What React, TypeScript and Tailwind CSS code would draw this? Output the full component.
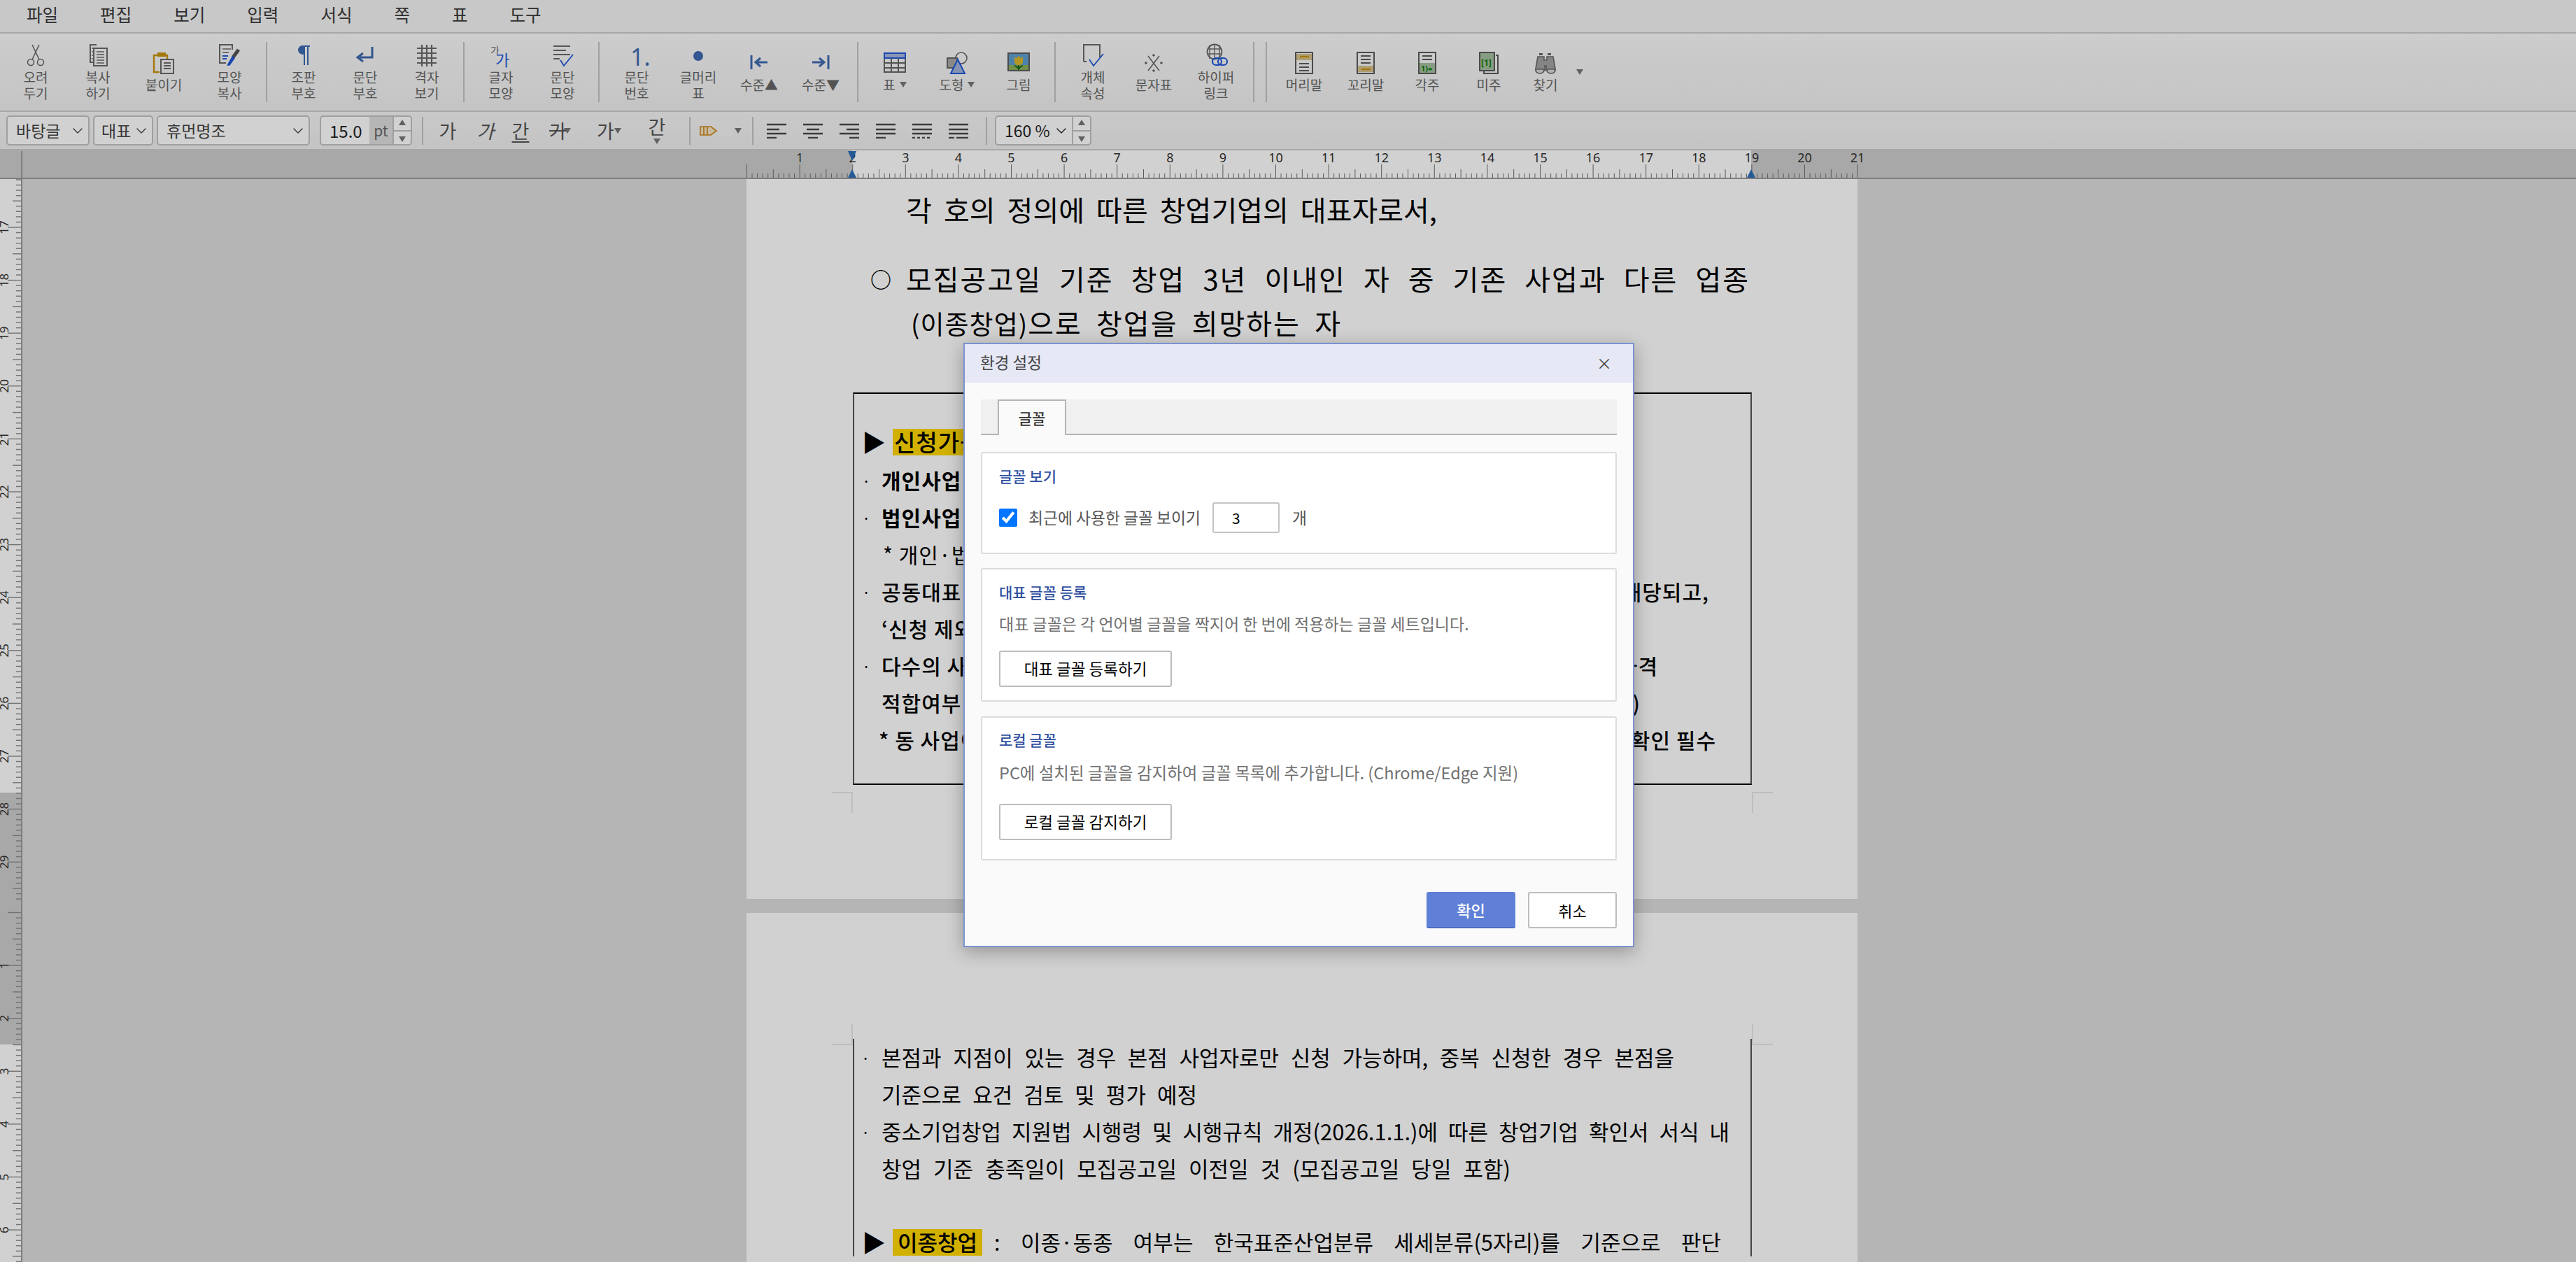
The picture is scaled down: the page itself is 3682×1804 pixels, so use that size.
import { ChevronDown } from 'lucide-react'

const GRAY = '#6a6a6a'
const BLUE = '#3f6bb0'
const VIVID = '#2058d8'

// toolbar icons, 32x32 box
const icons: Record<string, React.ReactNode> = {
    cut: (
        <g fill="none" stroke={GRAY} strokeWidth="1.6">
            <circle cx="9" cy="26" r="4.5" />
            <circle cx="23" cy="26" r="4.5" />
            <path d="M11 22 21 1M21 22 11 1" />
        </g>
    ),
    copy: (
        <g fill="none" stroke={GRAY} strokeWidth="2">
            <path d="M14 1H5v25h5" />
            <rect x="10" y="6" width="19" height="25" />
            <path d="M14 11h11M14 15h11M14 19h11M14 23h11M14 27h11M7 6h3M7 11h3M7 16h3M7 21h3" strokeWidth="1.5" />
        </g>
    ),
    paste: (
        <g fill="none">
            <path d="M11 5H2v24h8" stroke="#c8930e" strokeWidth="2.4" />
            <rect x="7" y="1" width="12" height="6" fill="#c8930e" />
            <path d="M15 5h6v5" stroke="#c8930e" strokeWidth="2.4" />
            <rect x="12" y="11" width="18" height="20" stroke={GRAY} strokeWidth="2" />
            <path d="M16 16h10M16 20h10M16 24h10" stroke={GRAY} strokeWidth="1.8" />
        </g>
    ),
    painter: (
        <g fill="none">
            <path d="M20 8V1H2v26h9" stroke={GRAY} strokeWidth="2" />
            <path d="M6 7h12M6 12h9" stroke={GRAY} strokeWidth="1.6" />
            <path d="M6 17h8M6 21h6" stroke={VIVID} strokeWidth="1.8" />
            <path d="M29 8 21 19" stroke="#555" strokeWidth="5" />
            <path d="M20 17 13 29c-1 2 2 3 4 1l7-10Z" fill={VIVID} />
        </g>
    ),
    pilcrow: <path d="M14 2h11v2h-2v26h-2V4h-3v26h-2V15c-5 0-8-3-8-6.500S11 2 14 2Z" fill={BLUE} />,
    enter: <path d="M26 4v15H8m5-6-8 6 8 6" fill="none" stroke={BLUE} strokeWidth="3" />,
    grid: (
        <path d="M9 1v31M16 1v31M23 1v31M2 6h28M2 13h28M2 20h28M2 27h28" fill="none" stroke={GRAY} strokeWidth="2.2" />
    ),
    charShape: (
        <g fontFamily="'Noto Sans CJK KR',sans-serif">
            <text x="1" y="14" fontSize="14" fill={GRAY}>가</text>
            <text x="8" y="31" fontSize="22" fill={VIVID}>가</text>
        </g>
    ),
    paraShape: (
        <g fill="none">
            <path d="M3 3h24M3 9h18M3 15h24M3 21h9" stroke={GRAY} strokeWidth="2" />
            <path d="M13 23l5 8L31 15" stroke={VIVID} strokeWidth="1.8" />
        </g>
    ),
    number: (
        <text x="7" y="31" fontSize="34" fill={BLUE} fontFamily="'Noto Sans',sans-serif">1.</text>
    ),
    bullet: <circle cx="16" cy="17" r="7" fill={BLUE} />,
    outdent: <path d="M5 5v20M28 15H11m7-6-7 6 7 6" fill="none" stroke={BLUE} strokeWidth="3" />,
    indent: <path d="M27 5v20M4 15h17m-7-6 7 6-7 6" fill="none" stroke={BLUE} strokeWidth="3" />,
    table: (
        <g fill="none">
            <rect x="1" y="2" width="30" height="27" stroke="#666" strokeWidth="2" />
            <rect x="1" y="2" width="30" height="7" fill="#a9b8dc" stroke={VIVID} strokeWidth="2" />
            <path d="M1 16h30M1 23h30M11 9v20M21 9v20" stroke="#666" strokeWidth="2" />
        </g>
    ),
    shape: (
        <g fill="none">
            <circle cx="22" cy="9" r="8" stroke="#666" strokeWidth="1.6" />
            <rect x="2" y="9" width="14" height="14" fill="#a8a8a8" stroke="#666" strokeWidth="2" />
            <path d="M17 11 27 31H7Z" fill="#a3b4da" stroke={VIVID} strokeWidth="2" />
        </g>
    ),
    picture: (
        <g>
            <rect x="1" y="2" width="30" height="25" fill="#5f9fd0" stroke="#5c5c5c" strokeWidth="2" />
            <rect x="2" y="19" width="28" height="7" fill="#8bb05a" />
            <path d="M10 7l3 2 3-3 3 3 3-2v7c0 4-3 5-6 5s-6-1-6-5Z" fill="#d9b92e" />
            <path d="M16 19v6M10 20c2 0 5 2 6 5 1-3 4-5 6-5" stroke="#1d6a1d" strokeWidth="2" fill="none" />
        </g>
    ),
    props: (
        <g fill="none">
            <path d="M3 25V1h23v18M3 25h4" stroke={GRAY} strokeWidth="2" />
            <path d="M11 22l6 9L31 14" stroke={VIVID} strokeWidth="1.8" />
        </g>
    ),
    symbol: (
        <g fill={GRAY} stroke={GRAY}>
            <path d="M8 6 24 27M24 6 8 27" strokeWidth="1.6" />
            <circle cx="16" cy="5" r="1.300" />
            <circle cx="16" cy="27" r="1.300" />
            <circle cx="5" cy="16" r="1.300" />
            <circle cx="27" cy="16" r="1.300" />
        </g>
    ),
    link: (
        <g fill="none">
            <circle cx="14" cy="11" r="10.500" stroke={GRAY} strokeWidth="1.8" />
            <path d="M14 1v20M7 1v20M21 1v20M4 7h20M4 14h20" stroke={GRAY} strokeWidth="1.4" />
            <rect x="11" y="20" width="13" height="10" rx="5" stroke={VIVID} strokeWidth="2.200" />
            <rect x="19" y="20" width="13" height="10" rx="5" stroke={VIVID} strokeWidth="2.200" />
        </g>
    ),
    header: (
        <g fill="none">
            <rect x="4" y="1" width="24" height="30" stroke="#5c5c5c" strokeWidth="2" />
            <rect x="5" y="3" width="22" height="9" fill="#d6c38d" />
            <path d="M10 7h13" stroke="#c8930e" strokeWidth="2.400" />
            <path d="M9 17h14M9 22h14M9 27h14" stroke="#5c5c5c" strokeWidth="2" />
        </g>
    ),
    footer: (
        <g fill="none">
            <rect x="4" y="1" width="24" height="30" stroke="#5c5c5c" strokeWidth="2" />
            <path d="M9 6h14M9 11h14M9 16h14" stroke="#5c5c5c" strokeWidth="2" />
            <rect x="5" y="20" width="22" height="9" fill="#d6c38d" />
            <path d="M10 25h13" stroke="#c8930e" strokeWidth="2.400" />
        </g>
    ),
    footnote: (
        <g fill="none">
            <rect x="4" y="1" width="24" height="30" stroke="#5c5c5c" strokeWidth="2" />
            <path d="M9 6h14M9 11h14" stroke="#5c5c5c" strokeWidth="2" />
            <rect x="5" y="16" width="22" height="14" fill="#a5c09f" />
            <text x="7" y="28" fontSize="11" fontWeight="700" fill="#0c7a0c" fontFamily="'Noto Sans',sans-serif">1)=</text>
        </g>
    ),
    endnote: (
        <g fill="none">
            <path d="M26 5h3v26H9v-3" stroke="#5c5c5c" strokeWidth="2" />
            <rect x="3" y="1" width="21" height="26" fill="#a5c09f" stroke="#5c5c5c" strokeWidth="2" />
            <text x="5" y="20" fontSize="12" fontWeight="700" fill="#0c7a0c" fontFamily="'Noto Sans',sans-serif">[1]</text>
        </g>
    ),
    find: (
        <g>
            <path d="M7 2h5v3H7ZM19 2h5v3h-5Z" fill={GRAY} />
            <path d="M5 7h9v5h4V7h9l3 17v3H17v-7h-2v7H2v-3Z" fill="#a3a3a3" stroke={GRAY} strokeWidth="1.6" />
            <path d="M2 25c0 4 2 6 6 6s6-2 6-6ZM18 25c0 4 2 6 6 6s6-2 6-6Z" fill="#d9d9d9" stroke={GRAY} strokeWidth="1.6" />
        </g>
    ),
}

type Tool = { icon: string; lines: string[]; w: string; caret?: boolean; sep?: string }

const tools: Tool[] = [
    { icon: 'cut', lines: ['오려', '두기'], w: 'w-[88px]' },
    { icon: 'copy', lines: ['복사', '하기'], w: 'w-[90px]' },
    { icon: 'paste', lines: ['붙이기'], w: 'w-[98px]' },
    { icon: 'painter', lines: ['모양', '복사'], w: 'w-[90px]', sep: 'mx-[7px]' },
    { icon: 'pilcrow', lines: ['조판', '부호'], w: 'w-[90px]' },
    { icon: 'enter', lines: ['문단', '부호'], w: 'w-[86px]' },
    { icon: 'grid', lines: ['격자', '보기'], w: 'w-[90px]', sep: 'mx-[7px]' },
    { icon: 'charShape', lines: ['글자', '모양'], w: 'w-[90px]' },
    { icon: 'paraShape', lines: ['문단', '모양'], w: 'w-[86px]', sep: 'mx-[8px]' },
    { icon: 'number', lines: ['문단', '번호'], w: 'w-[90px]' },
    { icon: 'bullet', lines: ['글머리', '표'], w: 'w-[86px]' },
    { icon: 'outdent', lines: ['수준▲'], w: 'w-[88px]' },
    { icon: 'indent', lines: ['수준▼'], w: 'w-[88px]', sep: 'mx-[8px]' },
    { icon: 'table', lines: ['표'], w: 'w-[88px]', caret: true },
    { icon: 'shape', lines: ['도형'], w: 'w-[90px]', caret: true },
    { icon: 'picture', lines: ['그림'], w: 'w-[86px]', sep: 'mx-[8px]' },
    { icon: 'props', lines: ['개체', '속성'], w: 'w-[90px]' },
    { icon: 'symbol', lines: ['문자표'], w: 'w-[84px]' },
    { icon: 'link', lines: ['하이퍼', '링크'], w: 'w-[94px]', sep: 'ml-[6px]' },
]

const tools2: Tool[] = [
    { icon: 'header', lines: ['머리말'], w: 'w-[90px]' },
    { icon: 'footer', lines: ['꼬리말'], w: 'w-[86px]' },
    { icon: 'footnote', lines: ['각주'], w: 'w-[90px]' },
    { icon: 'endnote', lines: ['미주'], w: 'w-[86px]' },
    { icon: 'find', lines: ['찾기'], w: 'w-[76px]' },
]

function Tri({ down = true, className = '' }: { down?: boolean; className?: string }) {
    return (
        <svg viewBox="0 0 10 8" className={`h-[8px] w-[10px] ${className}`}>
            <path d={down ? 'M0 0h10L5 8Z' : 'M0 8h10L5 0Z'} fill="#777" />
        </svg>
    )
}

function Sep({ className = '' }: { className?: string }) {
    return <div className={`w-[2px] self-center bg-[#c4c4c4] ${className}`} />
}

function ToolButton({ tool }: { tool: Tool }) {
    return (
        <div className={`flex shrink-0 flex-col items-center ${tool.w}`}>
            <svg viewBox="0 0 32 32" className="h-[32px] w-[32px] overflow-visible">{icons[tool.icon]}</svg>
            <div className="mt-[3px] text-center text-[19px] leading-[23px] text-[#666]">
                {tool.lines.map((l) => (
                    <div key={l} className="flex items-center justify-center gap-[6px]">
                        {l}
                        {tool.caret && <Tri />}
                    </div>
                ))}
            </div>
        </div>
    )
}

function Toolbar() {
    return (
        <div className="flex h-[112px] items-center border-b-2 border-[#cdcdcd] bg-gradient-to-b from-[#fafafa] to-[#f0f0f0] pl-[7px]">
            {tools.map((t) => (
                <div key={t.icon} className="flex h-full items-center">
                    <ToolButton tool={t} />
                    {t.sep && <Sep className={`h-[86px] ${t.sep}`} />}
                </div>
            ))}
            <Sep className="mr-[8px] ml-[16px] h-[86px]" />
            {tools2.map((t) => (
                <ToolButton key={t.icon} tool={t} />
            ))}
            <Tri className="ml-[6px]" />
        </div>
    )
}

function Select({ text, w, pl = 'pl-[12px]' }: { text: string; w: string; pl?: string }) {
    return (
        <div className={`flex h-[43px] items-center justify-between rounded-[5px] border-2 border-[#c2c2c2] bg-white pr-[3px] text-[23px] whitespace-nowrap text-[#444] ${w} ${pl}`}>
            {text}
            <ChevronDown className="h-[24px] w-[24px] shrink-0" strokeWidth={1.4} />
        </div>
    )
}

function Stepper() {
    return (
        <div className="flex h-full w-[26px] flex-col items-center justify-around border-l-2 border-[#c2c2c2]">
            <Tri down={false} />
            <div className="h-[2px] w-full bg-[#c2c2c2]" />
            <Tri />
        </div>
    )
}

function AlignIcon({ rows }: { rows: string }) {
    return (
        <svg viewBox="0 0 30 22" className="mx-[11px] h-[22px] w-[30px]">
            <path d={rows} fill="none" stroke="#4a4a4a" strokeWidth="2.600" />
        </svg>
    )
}

function FormatBar() {
    return (
        <div className="flex h-[55px] items-center border-b-2 border-[#cdcdcd] bg-gradient-to-b from-[#f6f6f6] to-[#efefef] pl-[9px]">
            <Select text="바탕글" w="w-[119px]" />
            <Select text="대표" w="ml-[5px] w-[86px]" pl="pl-[10px]" />
            <Select text="휴먼명조" w="ml-[5px] w-[219px]" />
            <div className="ml-[14px] flex h-[43px] w-[132px] items-center rounded-[5px] border-2 border-[#c2c2c2] bg-white text-[#222]">
                <span className="w-[69px] pl-[12px] text-[24px]">15.0</span>
                <span className="flex h-full w-[33px] items-center justify-center bg-[#dedede] text-[21px] text-[#666]">pt</span>
                <Stepper />
            </div>
            <Sep className="ml-[14px] h-[40px]" />
            <div className="flex items-center text-[27px] leading-none text-[#555]">
                <div className="w-[70px] text-center">가</div>
                <div className="w-[38px] text-center italic">가</div>
                <div className="w-[62px] text-center underline underline-offset-4">간</div>
                <div className="flex w-[50px] items-center pl-[10px]">
                    <span className="line-through">가</span>
                    <Tri className="ml-[-4px]" />
                </div>
                <div className="flex w-[70px] items-center pl-[28px]">
                    가
                    <Tri />
                </div>
                <div className="flex w-[88px] flex-col items-center">
                    간
                    <Tri className="mt-[4px]" />
                </div>
            </div>
            <Sep className="ml-[2px] h-[40px]" />
            <div className="ml-[13px] flex items-center">
                <svg viewBox="0 0 26 20" className="h-[20px] w-[26px]">
                    <path d="M1 4h15l8 6-8 6H1ZM6 4v12M11 4v12" fill="#f2e3c2" stroke="#c8871a" strokeWidth="1.6" />
                </svg>
                <div className="h-[12px] w-[22px] bg-[#f4f4f4]" />
                <Tri className="ml-[2px]" />
            </div>
            <Sep className="ml-[15px] h-[40px]" />
            <div className="ml-[7px] flex items-center">
                <AlignIcon rows="M1 2h28M1 9h18M1 15h28M1 21h14" />
                <AlignIcon rows="M1 2h28M6 9h18M1 15h28M8 21h14" />
                <AlignIcon rows="M1 2h28M11 9h18M1 15h28M15 21h14" />
                <AlignIcon rows="M1 2h28M1 9h28M1 15h28M1 21h14" />
                <AlignIcon rows="M1 2h28M1 9h28M1 15h28M1 21h4M8 21h4M15 21h4M22 21h4" />
                <AlignIcon rows="M1 2h28M1 9h28M1 15h28M1 21h8M12 21h17" />
            </div>
            <Sep className="ml-[13px] h-[40px]" />
            <div className="ml-[11px] flex h-[43px] w-[138px] items-center rounded-[5px] border-2 border-[#c2c2c2] bg-white text-[#222]">
                <span className="flex flex-1 items-center justify-between pr-[3px] pl-[12px] text-[23px] whitespace-nowrap">
                    160 %
                    <ChevronDown className="h-[24px] w-[24px] shrink-0" strokeWidth={1.4} />
                </span>
                <Stepper />
            </div>
        </div>
    )
}

const CM = 7.56

function HRuler() {
    const ticks = Array.from({ length: 211 }, (_, i) => i)
    return (
        <svg viewBox="0 215 3682 41" className="block h-[41px] w-[3682px] shrink-0 overflow-visible">
            <rect x="0" y="215" width="3682" height="41" fill="#cecece" />
            <rect x="1218" y="215" width="1285" height="40" fill="#ffffff" />
            {ticks.map((i) => {
                const x = 1067.5 + i * CM
                const len = i % 10 === 0 ? 20 : i % 5 === 0 ? 13 : 7
                return <line key={i} x1={x} x2={x} y1={255 - len} y2={255} stroke="#6f6f6f" strokeWidth="1" />
            })}
            {ticks.filter((i) => i > 0 && i % 10 === 0).map((i) => (
                <text key={i} x={1067.5 + i * CM} y={232} fontSize="18" textAnchor="middle" fill="#333" fontFamily="'Noto Sans',sans-serif">
                    {i / 10}
                </text>
            ))}
            <path d="M1212 216h12l-6 14ZM1212 254h12l-6-12ZM2497 254h12l-6-12Z" fill="#2c6fb8" />
            <rect x="0" y="254" width="3682" height="2" fill="#9a9a9a" />
            <rect x="30" y="216" width="2" height="40" fill="#9a9a9a" />
        </svg>
    )
}

function VRuler() {
    const page1 = Array.from({ length: 298 }, (_, i) => i).filter((i) => -961.2 + i * CM > 255)
    const page2 = Array.from({ length: 70 }, (_, i) => i)
    const tick = (y: number, i: number) => {
        const len = i % 10 === 0 ? 19 : i % 5 === 0 ? 12 : 7
        return (
            <g key={y}>
                <line x1={30 - len} x2={30} y1={y} y2={y} stroke="#8c8c8c" strokeWidth="1.4" />
                {i % 10 === 0 && i > 0 && (
                    <text transform={`rotate(-90 12 ${y})`} x={12} y={y} fontSize="17" textAnchor="middle" fill="#333" fontFamily="'Noto Sans',sans-serif">
                        {i / 10}
                    </text>
                )}
            </g>
        )
    }
    return (
        <svg viewBox="0 255 32 1549" className="block h-[1549px] w-[32px] shrink-0">
            <rect x="0" y="255" width="32" height="1549" fill="#ffffff" />
            <rect x="0" y="1132" width="30" height="360" fill="#cecece" />
            {page1.map((i) => tick(-961.2 + i * CM, i))}
            {page2.map((i) => tick(1303.5 + i * CM, i))}
            <rect x="30" y="255" width="2" height="1549" fill="#9a9a9a" />
        </svg>
    )
}

type RowProps = { bullet?: string; left: React.ReactNode; right?: React.ReactNode; w: string; cls?: string }

function Row({ bullet = '·', left, right, w, cls = 'font-medium' }: RowProps) {
    return (
        <div className="flex h-[53px] items-center pl-[11px] text-[30px] text-black">
            <span className="w-[28px] shrink-0 text-[22px]">{bullet}</span>
            <div className={`flex justify-between tracking-[1px] whitespace-nowrap ${w} ${cls}`}>
                <span>{left}</span>
                {right && <span>{right}</span>}
            </div>
        </div>
    )
}

function CropMark({ kind }: { kind: 'bl' | 'br' | 'tl' | 'tr' }) {
    const sides = {
        bl: 'border-t-2 border-r-2',
        br: 'border-t-2 border-l-2',
        tl: 'border-b-2 border-r-2',
        tr: 'border-b-2 border-l-2',
    }
    return <div className={`h-[30px] w-[30px] border-[#e8e8e8] ${sides[kind]}`} />
}

function PageOne() {
    return (
        <div className="h-[1029px] w-[1588px] bg-white pt-[13px] text-black">
            <div className="ml-[228px] h-[60px] w-[759px] text-[40px] leading-[60px] whitespace-nowrap [text-align-last:justify]">
                각 호의 정의에 따른 창업기업의 대표자로서,
            </div>
            <div className="mt-[39px] ml-[177px] flex h-[60px] text-[40px] leading-[60px]">
                <span className="w-[51px] text-[30px] font-bold">○</span>
                <div className="w-[1206px] tracking-[2px] whitespace-nowrap [text-align-last:justify]">
                    모집공고일 기준 창업 3년 이내인 자 중 기존 사업과 다른 업종
                </div>
            </div>
            <div className="mt-[3px] ml-[235px] h-[60px] w-[616px] text-[40px] leading-[60px] tracking-[2px] whitespace-nowrap [text-align-last:justify]">
                <span className="text-[37px] tracking-[1px]">(이종창업)</span>으로 창업을 희망하는 자
            </div>
            <div className="mt-[70px] ml-[152px] h-[561px] w-[1285px] border-x-2 border-x-[#555] border-y-2 border-y-black pt-[40px]">
                <div className="flex h-[57px] items-center pl-[11px]">
                    <span className="w-[44px] text-[34px]">▶</span>
                    <span className="flex h-[38px] w-[200px] items-center bg-[#ffd700] pl-[2px] text-[33px] font-medium tracking-[1px]">
                        신청가능
                    </span>
                </div>
                <Row left="개인사업" w="w-[200px]" cls="font-bold" />
                <Row left="법인사업" w="w-[200px]" cls="font-bold" />
                <Row bullet="" left="* 개인·법인" w="ml-[2px] w-[200px]" cls="font-normal" />
                <Row left="공동대표" right="해당되고," w="w-[1183px]" />
                <Row bullet="" left="‘신청 제외" w="w-[200px]" />
                <Row left="다수의 사업" right="자격" w="w-[1110px]" />
                <Row bullet="" left="적합여부" right=")" w="w-[1085px]" />
                <Row bullet="" left="* 동 사업이" right="확인 필수" w="ml-[-4px] w-[1197px]" />
            </div>
            <div className="ml-[122px] flex w-[1345px] justify-between pt-[10px]">
                <CropMark kind="bl" />
                <CropMark kind="br" />
            </div>
        </div>
    )
}

function PageTwoLine({ text, w, dot = false }: { text: string; w: string; dot?: boolean }) {
    return (
        <div className="flex h-[53px] items-center pl-[10px] text-[31px] whitespace-nowrap text-black">
            <span className="w-[29px] shrink-0 text-[22px]">{dot ? '·' : ''}</span>
            <div className={`[text-align-last:justify] ${w}`}>{text}</div>
        </div>
    )
}

function PageTwo() {
    return (
        <div className="mt-[20px] h-[500px] w-[1588px] bg-white pt-[159px]">
            <div className="ml-[122px] flex w-[1345px] justify-between">
                <CropMark kind="tl" />
                <CropMark kind="tr" />
            </div>
            <div className="ml-[152px] h-[311px] w-[1285px] border-x-2 border-[#555]">
                <div className="-mt-[9px]">
                    <PageTwoLine dot text="본점과 지점이 있는 경우 본점 사업자로만 신청 가능하며, 중복 신청한 경우 본점을" w="w-[1133px]" />
                    <PageTwoLine text="기준으로 요건 검토 및 평가 예정" w="w-[451px]" />
                    <PageTwoLine dot text="중소기업창업 지원법 시행령 및 시행규칙 개정(2026.1.1.)에 따른 창업기업 확인서 서식 내" w="w-[1212px]" />
                    <PageTwoLine text="창업 기준 충족일이 모집공고일 이전일 것 (모집공고일 당일 포함)" w="w-[899px]" />
                </div>
                <div className="mt-[50px] flex h-[57px] items-center pl-[11px] text-black">
                    <span className="w-[44px] text-[34px]">▶</span>
                    <span className="flex h-[38px] w-[128px] shrink-0 items-center justify-center bg-[#ffd700] text-[31px] font-medium">
                        이종창업
                    </span>
                    <div className="ml-[17px] w-[1039px] text-[31px] whitespace-nowrap [text-align-last:justify]">
                        : 이종·동종 여부는 한국표준산업분류 세세분류(5자리)를 기준으로 판단
                    </div>
                </div>
            </div>
        </div>
    )
}

function SectionCard({ title, h, className = '', children }: { title: string; h: string; className?: string; children: React.ReactNode }) {
    return (
        <section className={`rounded-[3px] border-2 border-[#dcdcdc] bg-white px-[24px] ${h} ${className}`}>
            <h3 className="text-[21px] leading-[24px] font-medium text-[#2f4f9f]">{title}</h3>
            {children}
        </section>
    )
}

function OutlineButton({ label, className = '' }: { label: string; className?: string }) {
    return (
        <button className={`flex h-[52px] w-[247px] items-center justify-center rounded-[3px] border-2 border-[#bdbdbd] bg-white text-[22.500px] text-black ${className}`}>
            {label}
        </button>
    )
}

function Dialog() {
    return (
        <div className="absolute top-[490px] left-[1377px] h-[864px] w-[959px] border-2 border-[#7a93cf] bg-[#fafafa] shadow-[0_6px_24px_rgba(0,0,0,0.3)]">
            <div className="flex h-[55px] items-center justify-between bg-[#e6e8f5] pr-[30px] pb-[3px] pl-[22px] text-[22.500px] text-[#444]">
                <span>환경 설정</span>
                <span className="text-[22px]">×</span>
            </div>
            <div className="px-[23px] pt-[24px]">
                <div className="h-[51px] border-b-2 border-[#b4b4b4] bg-[#f0f0f0] pl-[24px]">
                    <div className="flex h-[51px] w-[98px] items-center justify-center border-x-2 border-t-2 border-[#b4b4b4] bg-[#fafafa] text-[21px] font-medium text-[#333]">
                        글꼴
                    </div>
                </div>
                <SectionCard title="글꼴 보기" h="h-[146px] pt-[20px]" className="mt-[24px]">
                    <div className="mt-[26px] flex h-[44px] items-center text-[22.800px] text-[#555]">
                        <input type="checkbox" defaultChecked className="m-0 h-[26px] w-[26px]" />
                        <span className="ml-[16px]">최근에 사용한 글꼴 보이기</span>
                        <input
                            readOnly
                            value="3"
                            className="ml-[17px] h-[44px] w-[96px] rounded-[3px] border-2 border-[#c4c4c4] bg-white pl-[26px] text-[21px] text-black"
                        />
                        <span className="ml-[18px]">개</span>
                    </div>
                </SectionCard>
                <SectionCard title="대표 글꼴 등록" h="h-[191px] pt-[20px]" className="mt-[20px]">
                    <p className="mt-[18px] text-[23px] leading-[30px] text-[#707070]">
                        대표 글꼴은 각 언어별 글꼴을 짝지어 한 번에 적용하는 글꼴 세트입니다.
                    </p>
                    <OutlineButton label="대표 글꼴 등록하기" className="mt-[24px]" />
                </SectionCard>
                <SectionCard title="로컬 글꼴" h="h-[206px] pt-[19px]" className="mt-[21px]">
                    <p className="mt-[20px] text-[23.500px] leading-[30px] text-[#707070]">
                        PC에 설치된 글꼴을 감지하여 글꼴 목록에 추가합니다. (Chrome/Edge 지원)
                    </p>
                    <OutlineButton label="로컬 글꼴 감지하기" className="mt-[30px]" />
                </SectionCard>
                <div className="mt-[45px] flex justify-end gap-[18px]">
                    <button className="flex h-[52px] w-[127px] items-center justify-center rounded-[3px] border-b-2 border-[#4d6cc0] bg-[#5f80d6] text-[22px] font-medium text-white">
                        확인
                    </button>
                    <button className="flex h-[52px] w-[127px] items-center justify-center rounded-[3px] border-2 border-[#bdbdbd] bg-white text-[22px] text-black">
                        취소
                    </button>
                </div>
            </div>
        </div>
    )
}

const menus = ['파일', '편집', '보기', '입력', '서식', '쪽', '표', '도구']

export default function App() {
    return (
        <div className="relative flex h-[1804px] w-[3682px] flex-col overflow-hidden bg-[#dddddd] [font-family:'Noto_Sans_CJK_KR','Noto_Sans',sans-serif]">
            {/* Menu bar */}
            <div className="flex h-[48px] shrink-0 items-center border-b-2 border-[#cdcdcd] bg-[#f5f5f5] pb-[4px] pl-[8px] text-[24.500px] text-[#3a3a3a]">
                {menus.map((m) => (
                    <span key={m} className="px-[30px]">{m}</span>
                ))}
            </div>
            <Toolbar />
            <FormatBar />
            <HRuler />

            <div className="flex flex-1 overflow-hidden">
                <VRuler />
                <div className="ml-[1035px] h-full">
                    <PageOne />
                    <PageTwo />
                </div>
            </div>

            {/* Modal */}
            <div className="absolute inset-0 bg-black/18" />
            <Dialog />
        </div>
    )
}
